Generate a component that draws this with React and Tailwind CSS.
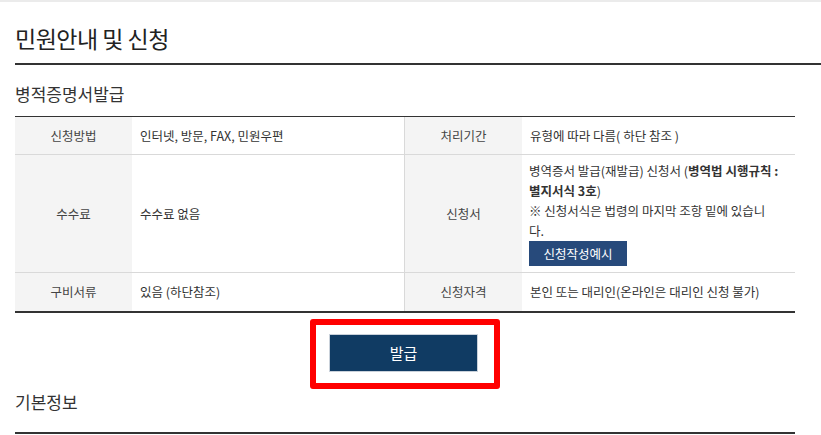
import React from "react";

const F = { fontFamily: '"Noto Sans CJK KR", "Noto Sans", sans-serif' };

function Th({ children, className = "" }) {
  return (
    <div className={"bg-[#f4f4f4] flex items-center justify-center text-[12.5px] leading-[20px] text-[#444] " + className}>
      {children}
    </div>
  );
}

function Td({ children, className = "" }) {
  return (
    <div className={"flex items-center px-[8px] text-[12.5px] leading-[20px] text-[#333] " + className}>
      {children}
    </div>
  );
}

export default function App() {
  return (
    <div style={F} className="w-[821px] h-[435px] bg-white overflow-hidden border-t-2 border-[#ebebeb]">
      <h2 className="ml-[15px] pt-[20px] pb-[9px] text-[23px] leading-[32px] text-[#222] border-b-2 border-[#333] tracking-[-0.5px]">
        민원안내 및 신청
      </h2>
      <h3 className="ml-[15px] pt-[17px] pb-[10px] text-[17px] leading-[24px] text-[#333]">
        병적증명서발급
      </h3>
      <div className="ml-[15px] w-[780px] border-t border-b-2 border-[#333]">
        <div className="grid grid-cols-[117px_272px_118px_273px] border-b border-[#d9d9d9]">
          <Th className="h-[37px]">신청방법</Th>
          <Td>인터넷, 방문, FAX, 민원우편</Td>
          <Th className="border-l border-[#d9d9d9]">처리기간</Th>
          <Td>유형에 따라 다름( 하단 참조 )</Td>
        </div>
        <div className="grid grid-cols-[117px_272px_118px_273px] border-b border-[#d9d9d9]">
          <Th className="h-[117px]">수수료</Th>
          <Td>수수료 없음</Td>
          <Th className="border-l border-[#d9d9d9]">신청서</Th>
          <div className="px-[7px] py-[6px] text-[12.5px] leading-[20px] text-[#333] whitespace-nowrap">
            <div>
              병역증서 발급(재발급) 신청서 (<b className="font-bold">병역법 시행규칙 :</b>
            </div>
            <div>
              <b className="font-bold">별지서식 3호</b>)
            </div>
            <div>※ 신청서식은 법령의 마지막 조항 밑에 있습니</div>
            <div>다.</div>
            <div className="w-[98px] h-[25px] bg-[#274a7b] text-white text-[12.5px] flex items-center justify-center">
              신청작성예시
            </div>
          </div>
        </div>
        <div className="grid grid-cols-[117px_272px_118px_273px]">
          <Th className="h-[38px]">구비서류</Th>
          <Td>있음 (하단참조)</Td>
          <Th className="border-l border-[#d9d9d9]">신청자격</Th>
          <Td>본인 또는 대리인(온라인은 대리인 신청 불가)</Td>
        </div>
      </div>
      <div className="ml-[310px] mt-[6px] w-[190px] h-[70px] border-[6px] border-[#ff0000] rounded-[3px] pl-[13px] pt-[9px]">
        <button className="w-[149px] h-[38px] bg-[#103b63] border border-[#c9d1da] text-white text-[15px] flex items-center justify-center">
          발급
        </button>
      </div>
      <h3 className="ml-[15px] w-[780px] pt-[1px] pb-[18px] text-[17px] leading-[24px] text-[#333] border-b-2 border-[#333]">
        기본정보
      </h3>
    </div>
  );
}
